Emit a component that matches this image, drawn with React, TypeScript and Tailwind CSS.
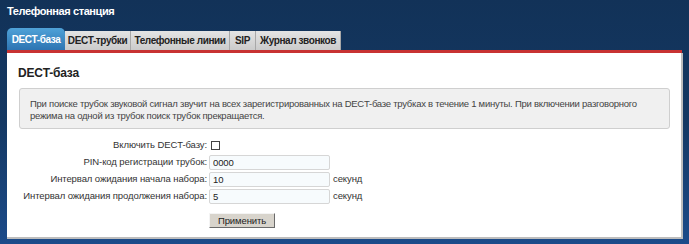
import React from 'react';

const tabs = [
  { label: 'DECT-база', w: 'w-[58px]' },
  { label: 'DECT-трубки', w: 'w-[66px]' },
  { label: 'Телефонные линии', w: 'w-[99px]' },
  { label: 'SIP', w: 'w-[26px]' },
  { label: 'Журнал звонков', w: 'w-[85px]' },
];

const Field: React.FC<{ label: string; value: string; unit?: string }> = ({ label, value, unit }) => (
  <div className="flex items-center h-[17px]">
    <div className="w-[202px] text-right pr-[2px] whitespace-nowrap">{label}</div>
    <input
      defaultValue={value}
      className="w-[121px] h-[15px] px-[3px] bg-[#f7fbfd] border border-[#d6d6d6] rounded-[2px] text-[9.5px] tracking-[-0.1px] text-[#222] outline-none"
    />
    {unit && <span className="ml-[3px]">{unit}</span>}
  </div>
);

export default function App() {
  return (
    <div className="w-[689px] h-[244px] bg-gradient-to-b from-[#123258] via-[#143863] to-[#1c4b8a] font-['Liberation_Sans',Arial,sans-serif] overflow-hidden">
      <div className="pl-[7px] pt-[3px] h-[28px] text-white font-bold text-[11px] tracking-[-0.4px]">Телефонная станция</div>
      <div className="ml-[7px] flex items-end h-[22px]">
        {tabs.map((t, i) => (
          <div
            key={t.label}
            className={
              i === 0
                ? `${t.w} h-[22px] flex items-center justify-center rounded-t-[5px] bg-gradient-to-b from-[#4fa2d8] to-[#2d74b2] text-white font-bold text-[10px] tracking-[-0.4px]`
                : `${t.w} h-[19px] flex items-center justify-center bg-gradient-to-b from-[#e4e4e4] to-[#cbcbcb] border-r border-[#a8a8a8] text-[#222] font-bold text-[10px] tracking-[-0.4px]`
            }
          >
            {t.label}
          </div>
        ))}
      </div>
      <div className="ml-[7px] w-[675px] h-[3px] bg-[#c83232]" />
      <div className="ml-[7px] w-[676px] h-[186px] bg-white border-r-[2px] border-b-[2px] border-[#bdbdbd] text-[9.5px] tracking-[-0.1px] text-[#333]">
        <div className="pl-[11px] pt-[14px] h-[35px] font-bold text-[12px] tracking-[-0.2px] text-[#222] leading-[12px]">DECT-база</div>
        <div className="ml-[12px] w-[651px] h-[41px] bg-[#f0f0f0] border border-[#cfcfcf] rounded-[3px] pl-[10px] pr-[20px] pt-[9px] leading-[12px] text-[9.5px] tracking-[-0.25px] text-[#444]">
          При поиске трубок звуковой сигнал звучит на всех зарегистрированных на DECT-базе трубках в течение 1 минуты. При включении разговорного режима на одной из трубок поиск трубок прекращается.
        </div>
        <div className="mt-[8px] flex flex-col">
          <div className="flex items-center h-[17px]">
            <div className="w-[202px] text-right pr-[2px]">Включить DECT-базу:</div>
            <span className="ml-[2px] w-[9px] h-[9px] border border-[#444] bg-white" />
          </div>
          <Field label="PIN-код регистрации трубок:" value="0000" />
          <Field label="Интервал ожидания начала набора:" value="10" unit="секунд" />
          <Field label="Интервал ожидания продолжения набора:" value="5" unit="секунд" />
          <div className="pl-[202px] pt-[8px]">
            <button className="w-[66px] h-[15px] bg-[#d8d4cc] border border-t-[#f4f4f4] border-l-[#f4f4f4] border-r-[#6a6a6a] border-b-[#6a6a6a] text-[9.5px] tracking-[-0.1px] text-[#222] leading-[12px]">
              Применить
            </button>
          </div>
        </div>
      </div>
    </div>
  );
}
